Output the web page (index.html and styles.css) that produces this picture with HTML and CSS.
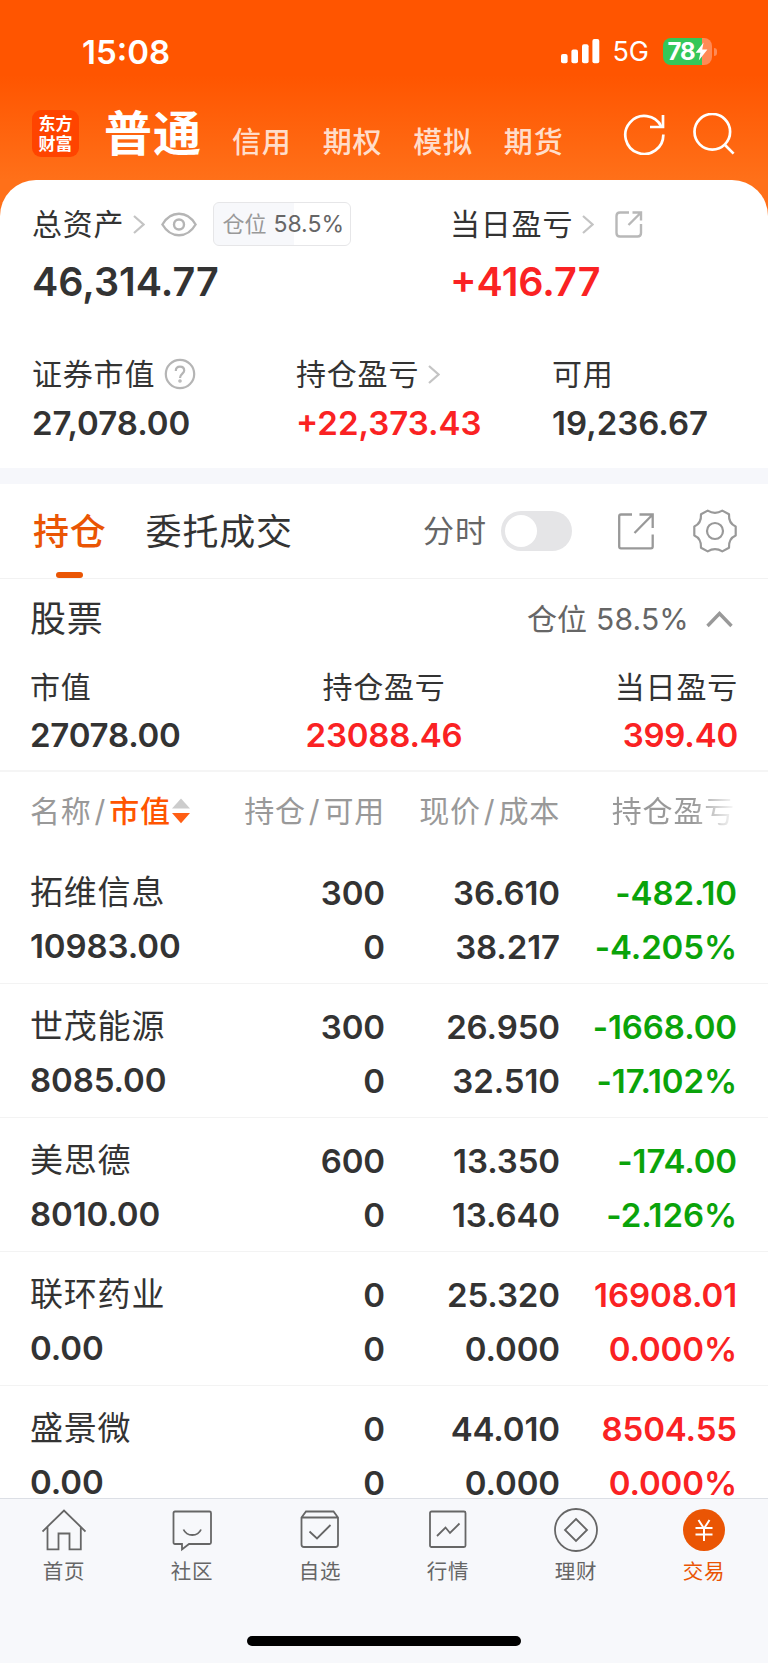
FILE: index.html
```html
<!DOCTYPE html>
<html lang="zh-CN">
<head>
    <meta charset="UTF-8">
    <meta name="viewport" content="width=device-width, initial-scale=1.0">
    <title>交易 - 普通</title>
    <link rel="stylesheet" href="styles.css">
</head>
<body>
    <header class="top">
        <div class="status-bar">
            <span class="time">15:08</span>
            <div class="status-right">
                <svg class="signal" width="39" height="25" viewBox="0 0 39 25" fill="#fff">
                    <rect x="0" y="15" width="6.6" height="9.3" rx="2"/>
                    <rect x="10.4" y="10.5" width="6.6" height="13.8" rx="2"/>
                    <rect x="21" y="5.3" width="6.6" height="19" rx="2"/>
                    <rect x="31.4" y="0" width="6.9" height="24.3" rx="2"/>
                </svg>
                <span class="network">5G</span>
                <div class="battery">
                    <span class="battery-level">78</span>
                    <svg width="13" height="19" viewBox="0 0 13 19"><path d="M8.6 0.6L0.6 10.8H5.4L3.8 18.4L12.4 7.6H7.2Z" fill="#fff"/></svg>
                </div>
                <span class="battery-tip"></span>
            </div>
        </div>
        <nav class="account-nav">
            <div class="logo"><span>东方</span><span>财富</span></div>
            <span class="account active">普通</span>
            <span class="account">信用</span>
            <span class="account">期权</span>
            <span class="account">模拟</span>
            <span class="account">期货</span>
            <div class="nav-icons">
                <svg width="42" height="42" viewBox="0 0 42 42" fill="none" stroke="#fff" stroke-width="2.7">
                    <path d="M40.3 21.5A19 19 0 1 1 38.3 13.5"/>
                    <path d="M40 2V14H27"/>
                </svg>
                <svg width="42" height="42" viewBox="0 0 42 42" fill="none" stroke="#fff" stroke-width="2.7">
                    <circle cx="19.3" cy="18.8" r="17.8"/>
                    <path d="M31.5 31.5L40.6 40.6"/>
                </svg>
            </div>
        </nav>
    </header>

    <main>
        <section class="assets">
            <div class="assets-main">
                <div class="asset">
                    <div class="label">总资产
                        <svg class="arrow" width="12" height="19" viewBox="0 0 12 19"><path d="M1 1L10.5 9.5L1 18"/></svg>
                        <svg class="eye" width="36" height="25" viewBox="0 0 36 25" fill="none" stroke="#b5b5b5" stroke-width="2.4">
                            <path d="M1.4 12.5C5.5 5.5 11 1.8 18 1.8S30.5 5.5 34.6 12.5C30.5 19.5 25 23.2 18 23.2S5.5 19.5 1.4 12.5Z"/>
                            <circle cx="18" cy="12.5" r="5"/>
                        </svg>
                        <span class="ratio">仓位 <b>58.5%</b></span>
                    </div>
                    <div class="value big">46,314.77</div>
                </div>
                <div class="asset">
                    <div class="label">当日盈亏
                        <svg class="arrow" width="12" height="19" viewBox="0 0 12 19"><path d="M1 1L10.5 9.5L1 18"/></svg>
                        <svg class="share" width="28" height="28" viewBox="0 0 28 28" fill="none" stroke="#b8b8b8" stroke-width="2.4">
                            <path d="M14 2.5H5Q1.5 2.5 1.5 6V23Q1.5 26.5 5 26.5H22.5Q26 26.5 26 23V14"/>
                            <path d="M17.500 2.500H26V10.500M26 2.500L13.500 15"/>
                        </svg>
                    </div>
                    <div class="value big red">+416.77</div>
                </div>
            </div>
            <div class="assets-sub">
                <div class="asset">
                    <div class="label">证券市值
                        <svg class="help" width="32" height="32" viewBox="0 0 32 32" fill="none" stroke="#b5b5b5" stroke-width="2.2">
                            <circle cx="16" cy="16" r="14.2"/>
                            <path d="M11.8 13Q11.8 8.6 16 8.6T20.2 12.6C20.2 15.6 16 15.8 16 20"/>
                            <circle cx="16" cy="23" r="0.7"/>
                        </svg>
                    </div>
                    <div class="value">27,078.00</div>
                </div>
                <div class="asset">
                    <div class="label">持仓盈亏
                        <svg class="arrow" width="12" height="19" viewBox="0 0 12 19"><path d="M1 1L10.5 9.5L1 18"/></svg>
                    </div>
                    <div class="value red">+22,373.43</div>
                </div>
                <div class="asset">
                    <div class="label">可用</div>
                    <div class="value">19,236.67</div>
                </div>
            </div>
        </section>

        <div class="tabs">
            <span class="tab active">持仓</span>
            <span class="tab">委托成交</span>
            <div class="tools">
                <span class="tools-label">分时</span>
                <span class="switch"></span>
                <svg class="export" width="36" height="37" viewBox="0 0 36 37" fill="none" stroke="#999" stroke-width="2.300">
                    <path d="M14 1.500H3Q1.200 1.500 1.200 3.300V33.500Q1.200 35.300 3 35.300H33Q34.700 35.300 34.700 33.500V21.500"/>
                    <path d="M21.500 1.500H34.700V15M34.700 1.500L16.500 20"/>
                </svg>
                <svg class="gear" width="44" height="44" viewBox="0 0 44 44" fill="none" stroke="#999" stroke-width="2.200" stroke-linejoin="round">
                    <path d="M8 5.300L14.700 1.600Q22 6 29.300 1.600L36 5.300Q35.500 14.500 42.700 17.500V26.500Q35.500 29.500 36 38.700L29.300 42.400Q22 38 14.700 42.400L8 38.700Q8.500 29.500 1.300 26.500V17.500Q8.500 14.500 8 5.300Z"/>
                    <circle cx="22" cy="22" r="8"/>
                </svg>
            </div>
        </div>

        <section class="summary">
            <div class="summary-head">
                <h2>股票</h2>
                <span class="position">仓位 58.5%</span>
                <svg width="27" height="17" viewBox="0 0 27 17" fill="none" stroke="#999" stroke-width="3.400"><path d="M1.500 15L13.500 2.500L25.500 15"/></svg>
            </div>
            <div class="summary-row">
                <div>
                    <div class="label">市值</div>
                    <div class="value">27078.00</div>
                </div>
                <div>
                    <div class="label">持仓盈亏</div>
                    <div class="value red">23088.46</div>
                </div>
                <div>
                    <div class="label">当日盈亏</div>
                    <div class="value red">399.40</div>
                </div>
            </div>
        </section>

        <section class="holdings">
            <div class="holding-head">
                <div>名称<i>/</i><span class="sorted">市值</span><svg width="18" height="26" viewBox="0 0 18 26"><path d="M0 10.5L9 0.5L18 10.5Z" fill="#ccc"/><path d="M0 15H18L9 25.3Z" fill="#ff5e14"/></svg></div>
                <div>持仓<i>/</i>可用</div>
                <div>现价<i>/</i>成本</div>
                <div class="fade">持仓盈亏</div>
            </div>
            <div class="holding">
                <div><span class="name">拓维信息</span><span>10983.00</span></div>
                <div><span>300</span><span>0</span></div>
                <div><span>36.610</span><span>38.217</span></div>
                <div class="green"><span>-482.10</span><span>-4.205%</span></div>
            </div>
            <div class="holding">
                <div><span class="name">世茂能源</span><span>8085.00</span></div>
                <div><span>300</span><span>0</span></div>
                <div><span>26.950</span><span>32.510</span></div>
                <div class="green"><span>-1668.00</span><span>-17.102%</span></div>
            </div>
            <div class="holding">
                <div><span class="name">美思德</span><span>8010.00</span></div>
                <div><span>600</span><span>0</span></div>
                <div><span>13.350</span><span>13.640</span></div>
                <div class="green"><span>-174.00</span><span>-2.126%</span></div>
            </div>
            <div class="holding">
                <div><span class="name">联环药业</span><span>0.00</span></div>
                <div><span>0</span><span>0</span></div>
                <div><span>25.320</span><span>0.000</span></div>
                <div class="red"><span>16908.01</span><span>0.000%</span></div>
            </div>
            <div class="holding">
                <div><span class="name">盛景微</span><span>0.00</span></div>
                <div><span>0</span><span>0</span></div>
                <div><span>44.010</span><span>0.000</span></div>
                <div class="red"><span>8504.55</span><span>0.000%</span></div>
            </div>
        </section>
    </main>

    <footer class="tab-bar">
        <div class="tab-items">
            <div class="tab-item">
                <svg viewBox="0 0 44 44"><path d="M0.500 23.500L22 2.500L43.500 23.500M5.500 19V41.300H16.500V25.500H27.500V41.300H38.800V19"/></svg>
                <span>首页</span>
            </div>
            <div class="tab-item">
                <svg viewBox="0 0 44 44"><path d="M5 3.500H39.500Q41 3.500 41 5V34.500Q41 36 39.500 36H19L12 41.500V36H5Q3.500 36 3.500 34.500V5Q3.500 3.500 5 3.500ZM13.500 21.500Q16 27 22.300 27T31 21.500"/></svg>
                <span>社区</span>
            </div>
            <div class="tab-item">
                <svg viewBox="0 0 44 44"><path d="M3.500 9.500V36.500Q3.500 39 6 39H37.500Q40 39 40 36.500V9.500L35.500 3.500H8L3.500 9.500ZM3.500 9.500H40M11.500 23.500L19 30.500L32.500 17"/></svg>
                <span>自选</span>
            </div>
            <div class="tab-item">
                <svg viewBox="0 0 44 44"><rect x="4" y="3.500" width="35.500" height="35.500" rx="1.500"/><path d="M11 28L19.500 19.500L24 25L33.500 15.500"/></svg>
                <span>行情</span>
            </div>
            <div class="tab-item">
                <svg viewBox="0 0 44 44"><circle cx="22" cy="22" r="21"/><path d="M22 11L33 22L22 33L11 22Z"/></svg>
                <span>理财</span>
            </div>
            <div class="tab-item active">
                <svg viewBox="0 0 44 44"><circle class="coin" cx="22" cy="22" r="21"/><path class="yen" d="M16.500 12L22 20.500L27.500 12M13.500 20H30.500M13.500 26.500H30.500M22 20.500V33"/></svg>
                <span>交易</span>
            </div>
        </div>
        <div class="home-indicator"></div>
    </footer>
</body>
</html>
```

FILE: styles.css
```css
* {
    box-sizing: border-box;
}

body {
    margin: 0;
    height: 1663px;
    display: flex;
    flex-direction: column;
    overflow: hidden;
    font-family: Inter, "Noto Sans CJK SC", sans-serif;
    color: #333;
    background: linear-gradient(#ff5500 75px, #ff7019 180px);
}

svg {
    flex-shrink: 0;
}

.top {
    height: 180px;
    color: #fff;
}

.status-bar {
    display: flex;
    justify-content: space-between;
    align-items: center;
    height: 103px;
    padding: 0 51px 0 82px;
}

.time {
    font-size: 33px;
    font-weight: 600;
}

.status-right {
    display: flex;
    align-items: center;
}

.network {
    margin: 0 14px 0 12px;
    font-size: 27px;
}

.battery {
    display: flex;
    align-items: center;
    justify-content: center;
    width: 49px;
    height: 27px;
    border-radius: 8px;
    background: linear-gradient(90deg, #34c759 39px, #ff8a55 39px);
}

.battery-level {
    font-size: 24px;
    font-weight: 700;
    letter-spacing: -1px;
}

.battery-tip {
    width: 3px;
    height: 8px;
    margin-left: 2px;
    border-radius: 0 4px 4px 0;
    background: #ff8a55;
}

.account-nav {
    display: flex;
    height: 62px;
    padding: 0 33px 0 32px;
}

.logo {
    display: flex;
    flex-direction: column;
    align-items: center;
    justify-content: center;
    width: 47px;
    height: 47px;
    margin: 7px 25px 0 0;
    border-radius: 9px;
    background: #ff4400;
    font-size: 17px;
    font-weight: 700;
    line-height: 20px;
}

.account {
    margin-right: 31px;
    font-size: 29px;
    font-weight: 500;
    line-height: 80px;
    letter-spacing: 0.8px;
    color: rgba(255, 255, 255, 0.8);
}

.account.active {
    margin-right: 30px;
    font-size: 48px;
    font-weight: 700;
    line-height: 62px;
    letter-spacing: 1px;
    color: #fff;
}

.nav-icons {
    display: flex;
    gap: 28px;
    margin: 10px 0 0 auto;
}

main {
    flex: 1;
    overflow: hidden;
    background: #fff;
    border-radius: 36px 36px 0 0;
}

.label {
    display: flex;
    align-items: center;
    height: 44px;
    font-size: 30px;
    line-height: 44px;
    letter-spacing: 0.8px;
    white-space: nowrap;
}

.value {
    font-size: 33px;
    font-weight: 600;
    line-height: 50px;
}

.red {
    color: #fa2223;
}

.green {
    color: #0aa30a;
}

/* asset overview */
.assets {
    height: 288px;
    padding: 22px 32px 0;
}

.assets-main {
    display: grid;
    grid-template-columns: 418px 1fr;
}

.assets-sub {
    display: grid;
    grid-template-columns: 264px 256px 1fr;
    margin-top: 41px;
}

.assets-sub .value {
    margin-top: 2px;
}

.value.big {
    margin-top: 7px;
    font-size: 39.5px;
    line-height: 58px;
}

.arrow {
    margin-left: 9px;
    fill: none;
    stroke: #c4c4c4;
    stroke-width: 2.2;
}

.eye {
    margin-left: 16px;
}

.ratio {
    display: flex;
    align-items: center;
    gap: 7px;
    width: 138px;
    height: 44px;
    margin-left: 16px;
    padding-left: 8px;
    border: 1px solid #e6e6e8;
    border-radius: 6px;
    background: linear-gradient(90deg, #f7f8fb 80px, #fff 80px);
    color: #999;
    font-size: 22px;
    letter-spacing: 0;
}

.ratio b {
    color: #666;
    font-size: 23px;
    font-weight: 400;
}

.share {
    margin-left: 21px;
}

.help {
    margin-left: 9px;
}

/* tabs */
.tabs {
    display: flex;
    height: 111px;
    padding: 0 31px 0 33px;
    border-top: 16px solid #f6f7fb;
    border-bottom: 1px solid #f2f2f2;
}

.tab {
    display: flex;
    flex-direction: column;
    align-items: center;
    margin-right: 39px;
    font-size: 36px;
    line-height: 96px;
    letter-spacing: 0.8px;
}

.tab.active {
    color: #ea5504;
    font-weight: 500;
}

.tab.active::after {
    content: "";
    width: 27px;
    height: 6px;
    margin-top: -8px;
    border-radius: 3px;
    background: #ea5504;
}

.tools {
    display: flex;
    align-items: center;
    height: 94px;
    margin-left: auto;
}

.tools-label {
    color: #666;
    font-size: 31px;
    line-height: 48px;
    letter-spacing: 1px;
}

.switch {
    width: 71px;
    height: 40px;
    margin: 0 46px 0 14px;
    padding: 4px;
    border-radius: 20px;
    background: #e5e5e7;
}

.switch::before {
    content: "";
    display: block;
    width: 32px;
    height: 32px;
    border-radius: 50%;
    background: #fff;
}

.gear {
    margin-left: 39px;
}

/* stock summary */
.summary {
    height: 193px;
    padding: 0 30px;
    border-bottom: 2px solid #f5f5f5;
}

.summary-head {
    display: flex;
    align-items: center;
    height: 80px;
    line-height: 44px;
}

.summary-head h2 {
    margin: 0;
    font-size: 36px;
    font-weight: 400;
    letter-spacing: 0.8px;
}

.position {
    margin: 0 17px 0 auto;
    color: #666;
    font-size: 30px;
    letter-spacing: 0.2px;
}

.summary-head svg {
    margin-right: 5px;
}

.summary-row {
    display: grid;
    grid-template-columns: 1fr 1fr 1fr;
    padding-top: 6px;
}

.summary-row .value {
    margin-top: 1px;
    letter-spacing: -0.2px;
}

.summary-row > :nth-child(2) {
    text-align: center;
}

.summary-row > :nth-child(2) .label {
    justify-content: center;
}

.summary-row > :nth-child(3) {
    text-align: right;
}

.summary-row > :nth-child(3) .label {
    justify-content: flex-end;
}

/* holdings list */
.holding-head, .holding {
    display: grid;
    grid-template-columns: 184px 171px 175px 1fr;
    padding: 0 31px 0 30px;
}

.holding-head {
    height: 78px;
    color: #999;
    font-size: 30px;
    line-height: 78px;
    letter-spacing: 0.8px;
    white-space: nowrap;
}

.holding-head > div {
    display: flex;
    align-items: center;
    justify-content: flex-end;
}

.holding-head > :first-child {
    justify-content: flex-start;
}

.holding-head i {
    margin: 0 3px;
    font-style: normal;
}

.holding-head svg {
    margin-left: 1px;
}

.sorted {
    color: #ff5500;
    font-weight: 500;
}

.holding-head .fade {
    padding-right: 2px;
    background: linear-gradient(90deg, #999 75%, #fff);
    -webkit-background-clip: text;
    background-clip: text;
    color: transparent;
}

.holding {
    height: 134px;
    padding-top: 16px;
    border-bottom: 1px solid #f3f3f3;
    font-size: 33px;
    font-weight: 600;
    line-height: 54px;
    letter-spacing: -0.1px;
}

.holding > div {
    display: flex;
    flex-direction: column;
    align-items: flex-end;
}

.holding > :first-child {
    align-items: flex-start;
    margin-top: -1px;
}

.name {
    font-size: 33px;
    font-weight: 400;
    letter-spacing: 0.8px;
    white-space: nowrap;
}

/* bottom tab bar */
.tab-bar {
    display: flex;
    flex-direction: column;
    align-items: center;
    justify-content: space-between;
    height: 165px;
    padding-bottom: 17px;
    border-top: 1px solid #dcdfe5;
    background: #f7f8fb;
}

.tab-items {
    display: grid;
    grid-template-columns: repeat(6, 1fr);
    width: 100%;
    padding-top: 9px;
}

.tab-item {
    display: flex;
    flex-direction: column;
    align-items: center;
    color: #666;
    font-size: 20.5px;
    line-height: 39px;
    letter-spacing: 0.8px;
}

.tab-item svg {
    width: 44px;
    height: 44px;
    fill: none;
    stroke: #666;
    stroke-width: 1.8;
}

.tab-item.active {
    color: #ea5504;
}

.tab-item .coin {
    fill: #ea5504;
    stroke: none;
}

.tab-item .yen {
    stroke: #fff;
    stroke-width: 2;
}

.home-indicator {
    width: 274px;
    height: 10px;
    border-radius: 5px;
    background: #000;
}
```
